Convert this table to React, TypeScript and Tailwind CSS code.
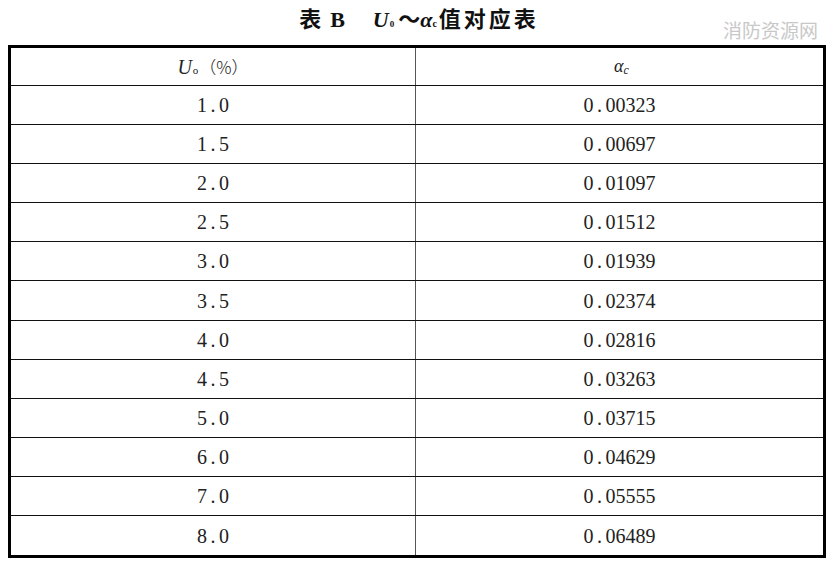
import React from 'react';

const rows: [string, string][] = [
  ['1.0', '0.00323'],
  ['1.5', '0.00697'],
  ['2.0', '0.01097'],
  ['2.5', '0.01512'],
  ['3.0', '0.01939'],
  ['3.5', '0.02374'],
  ['4.0', '0.02816'],
  ['4.5', '0.03263'],
  ['5.0', '0.03715'],
  ['6.0', '0.04629'],
  ['7.0', '0.05555'],
  ['8.0', '0.06489'],
];

// digits in the scan use a wide full-width style dot
function Num({ value }: { value: string }) {
  const [a, b] = value.split('.');
  return (
    <span className="font-['Liberation_Serif',serif]">
      {a}
      <span className="px-[3.5px]">.</span>
      {b}
    </span>
  );
}

export default function App() {
  return (
    <div className="relative w-[836px] h-[571px] bg-white overflow-hidden font-['Liberation_Serif',serif]">
      <div className="absolute right-[18px] top-[16px] text-[19px] text-[#c8c8c8] font-['Noto_Sans_CJK_SC',sans-serif]">
        消防资源网
      </div>

      <div className="h-[45px] flex items-center justify-center pl-[2px] pb-[8px]">
        <div className="flex items-baseline text-[22px] font-bold text-[#111]">
          <span className="font-['Noto_Sans_CJK_SC',sans-serif]">表</span>
          <span className="ml-[9px]">B</span>
          <span className="ml-[28px] italic">U</span>
          <span className="text-[9px] ml-[1px]">0</span>
          <span className="ml-[4px] font-['Noto_Sans_CJK_SC',sans-serif]">～</span>
          <span className="italic">α</span>
          <span className="text-[10px]">c</span>
          <span className="ml-[2px] tracking-[3px] font-['Noto_Sans_CJK_SC',sans-serif]">值对应表</span>
        </div>
      </div>

      <div className="ml-[8px] w-[818px] border-[3px] border-black flex flex-col text-[20px] text-[#222]">
        <div className="flex h-[38px] border-b-[1.5px] border-[#111]">
          <div className="w-[405px] flex items-center justify-center border-r-[1.5px] border-[#555]">
            <span className="italic">U</span>
            <span className="text-[11px] mt-[8px] ml-[1px]">o</span>
            <span className="ml-[1px] font-['Noto_Sans_CJK_SC',serif] font-light text-[17px]">（%）</span>
          </div>
          <div className="flex-1 flex items-center justify-center pl-[4px]">
            <span className="italic text-[18px]">α</span>
            <span className="italic text-[12px] mt-[6px]">c</span>
          </div>
        </div>
        {rows.map(([u, a], i) => (
          <div
            key={u}
            className={`flex h-[39.1px] ${i < rows.length - 1 ? 'border-b-[1.5px] border-[#111]' : ''}`}
          >
            <div className="w-[405px] flex items-center justify-center border-r-[1.5px] border-[#555]">
              <Num value={u} />
            </div>
            <div className="flex-1 flex items-center justify-center">
              <Num value={a} />
            </div>
          </div>
        ))}
      </div>
    </div>
  );
}
